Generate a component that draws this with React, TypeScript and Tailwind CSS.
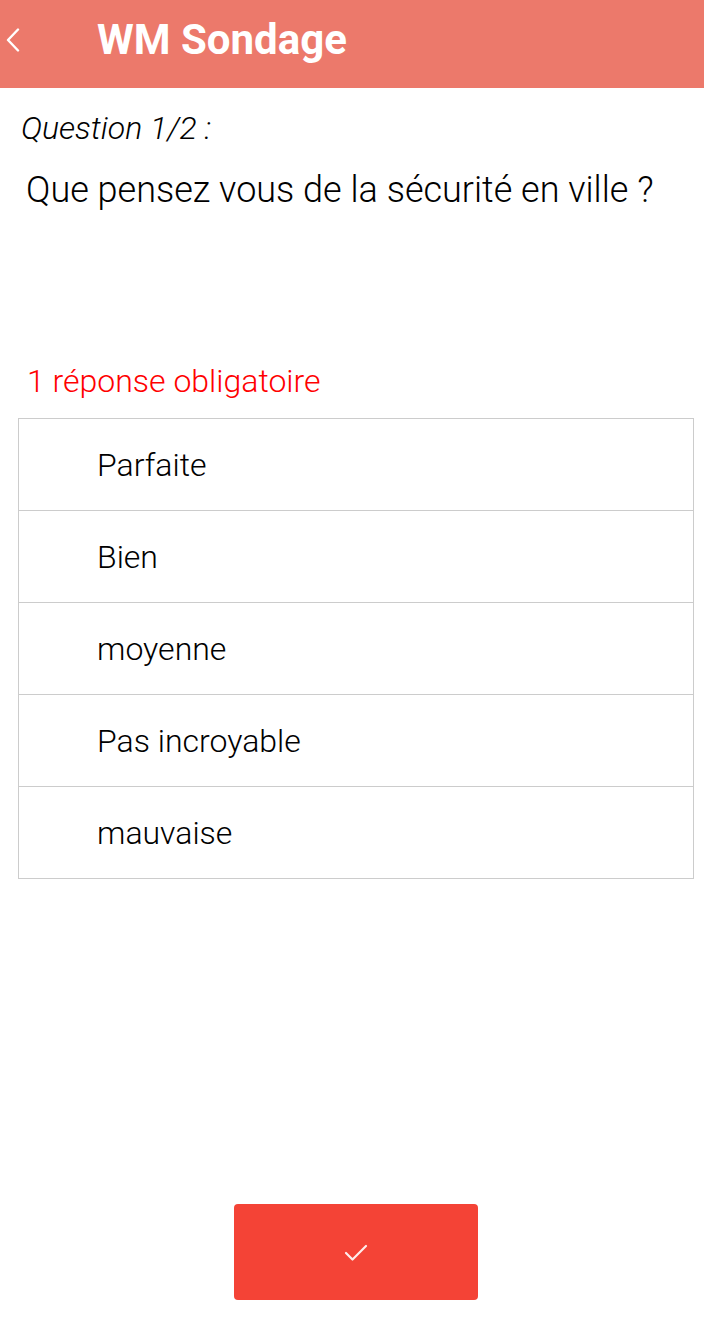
import React from "react";

const options = ["Parfaite", "Bien", "moyenne", "Pas incroyable", "mauvaise"];

export default function App() {
  return (
    <div className="w-[704px] h-[1338px] bg-white flex flex-col" style={{ fontFamily: "Roboto, 'Liberation Sans', sans-serif" }}>
      <header className="h-[88px] bg-[#ec796b] flex items-start shrink-0">
        <div className="w-[97px] pl-[6px] pt-[28px]">
          <svg width="14" height="24" viewBox="0 0 14 24" fill="none">
            <path d="M12 1.5 L2 12 L12 22.5" stroke="white" strokeWidth="2.4" strokeLinecap="round" strokeLinejoin="round" />
          </svg>
        </div>
        <h1 className="text-white font-bold text-[42px] leading-[42px] mt-[19px]">WM Sondage</h1>
      </header>
      <main className="flex-1 flex flex-col">
        <p className="pl-[21px] pt-[20px] italic font-light text-[32px] leading-[40px] text-black">Question 1/2 :</p>
        <p className="pl-[26px] pt-[20px] font-light text-[36px] leading-[44px] text-black">Que pensez vous de la sécurité en ville ?</p>
        <p className="pl-[27px] mt-[149px] font-light text-[32px] leading-[40px] text-[#ff0000]">1 réponse obligatoire</p>
        <div className="ml-[18px] mr-[10px] mt-[17px] border border-[#cccccc]">
          {options.map((o, i) => (
            <div key={o} className={`flex items-center pl-[78px] font-light text-[32px] text-black ${i > 0 ? "border-t border-[#cccccc] h-[92px]" : "h-[91px]"}`}>
              {o}
            </div>
          ))}
        </div>
        <div className="flex-1" />
        <div className="flex justify-center pl-[8px] pb-[38px]">
          <button className="w-[244px] h-[96px] bg-[#f44336] rounded-[4px] flex items-center justify-center">
            <svg width="24" height="19" viewBox="0 0 24 19" fill="none">
              <path d="M2 10 L8.5 16.5 L22 3" stroke="white" strokeWidth="2.2" strokeLinecap="round" strokeLinejoin="round" opacity="0.9" />
            </svg>
          </button>
        </div>
      </main>
    </div>
  );
}
